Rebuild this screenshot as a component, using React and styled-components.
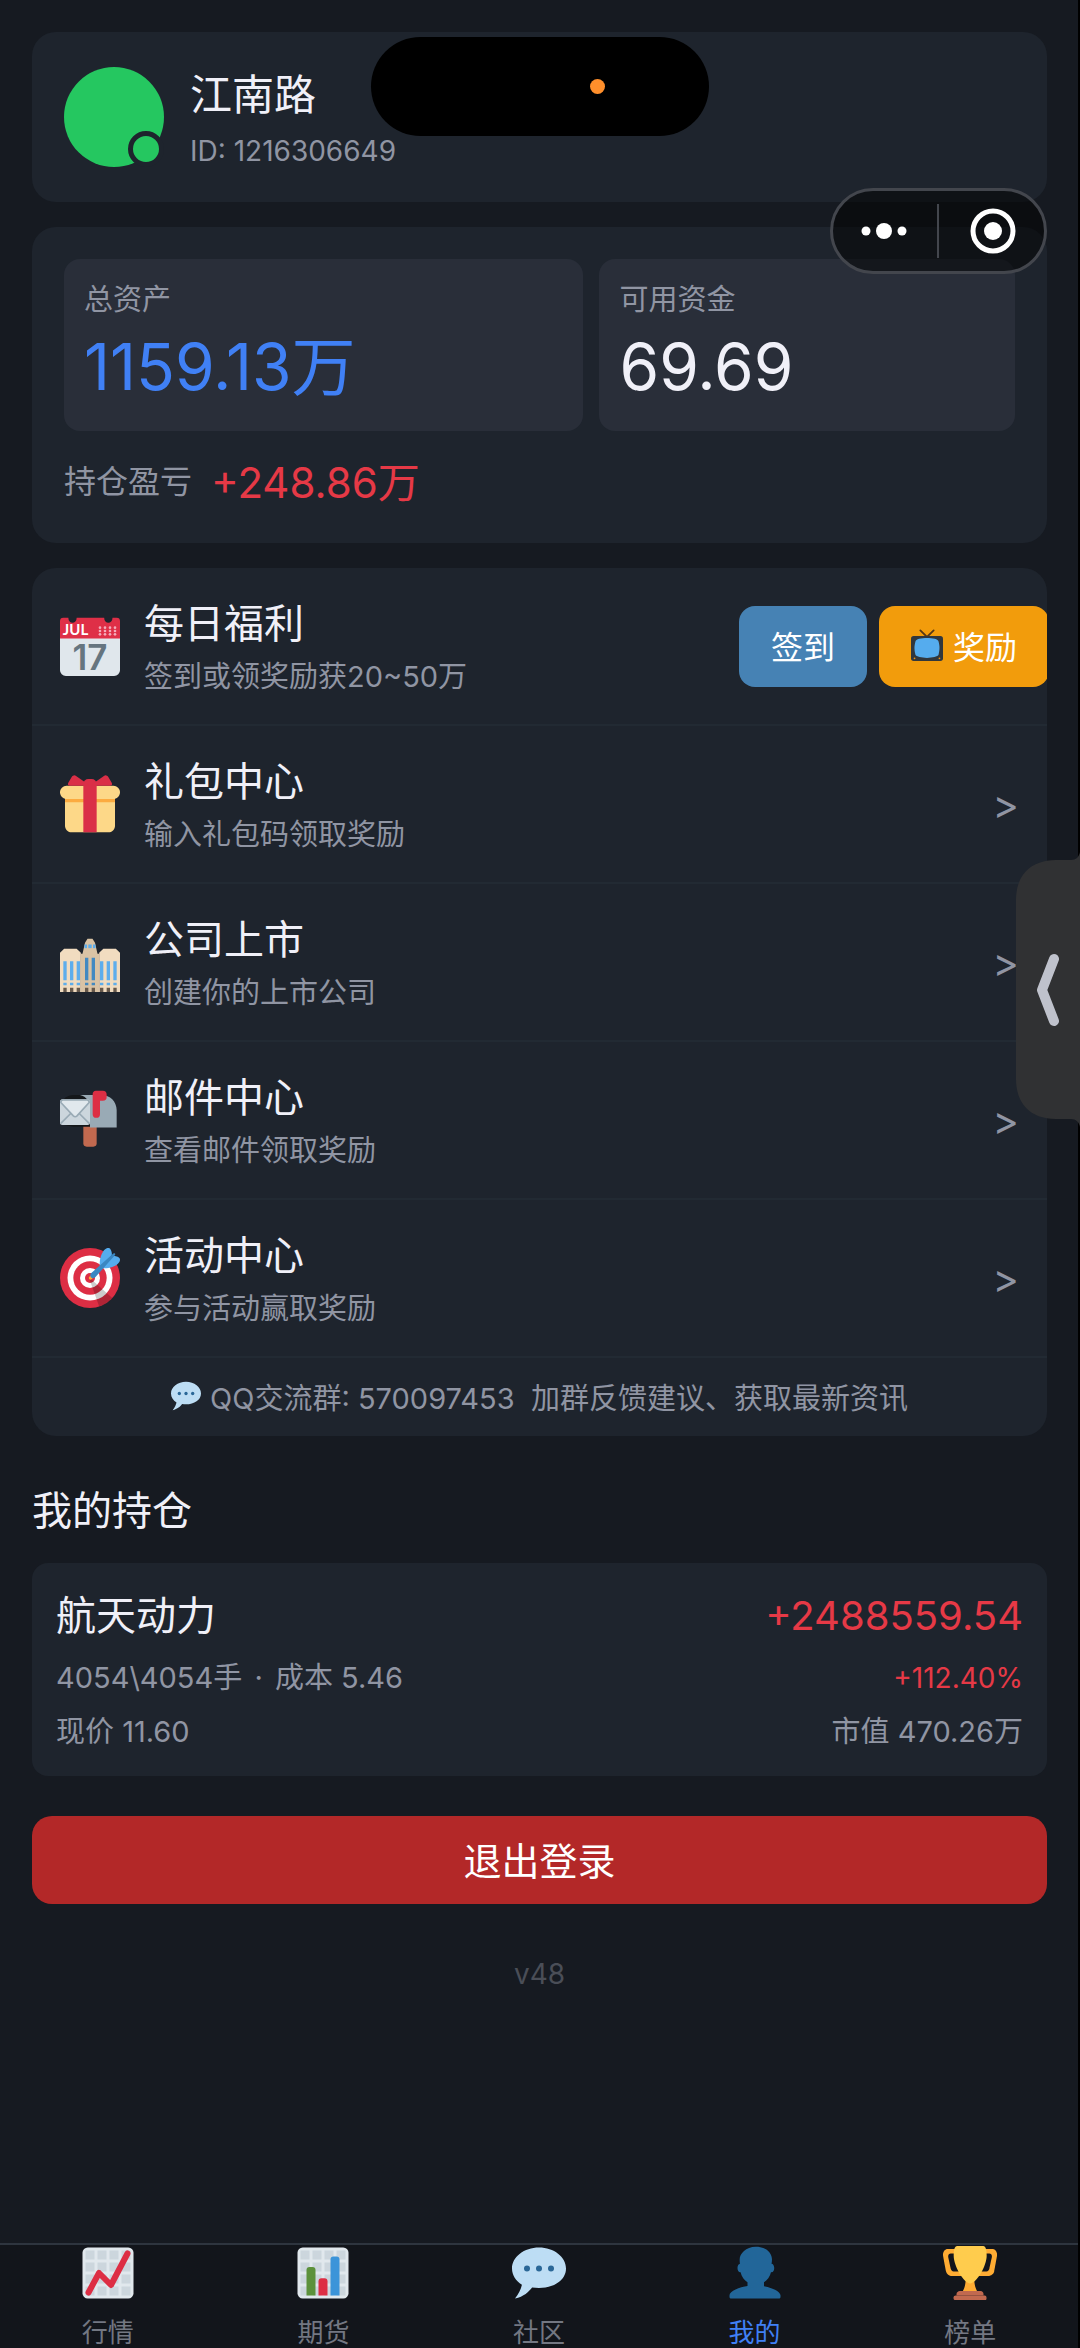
import styled, { createGlobalStyle } from 'styled-components';

const GlobalStyle = createGlobalStyle`
    * {
        box-sizing: border-box;
    }
    body {
        margin: 0;
        background-color: #161a21;
        color: #f0f0f8;
        font-family: Inter, "Noto Sans CJK SC", sans-serif;
    }
    button {
        border: 0;
        padding: 0;
        background: none;
        color: inherit;
        font: inherit;
        cursor: pointer;
    }
    a {
        color: inherit;
        text-decoration: none;
    }
    svg {
        flex: none;
    }
`

// PAGE
const Page = styled.div`
    position: relative;
    display: flex;
    flex-direction: column;
    min-height: 100vh;
    border-right: 2px solid #000;
`
const Main = styled.main`
    flex: 1;
    display: flex;
    flex-direction: column;
    padding: 32px 31px 32px 32px;
`
const Card = styled.section`
    background-color: #1e242d;
    border-radius: 24px;
    margin-bottom: 25px;
    overflow: hidden;
`

// PROFILE
const Profile = styled(Card)`
    display: flex;
    align-items: center;
    gap: 26px;
    height: 170px;
    padding: 0 32px;
`
const Avatar = styled.div`
    position: relative;
    width: 100px;
    height: 100px;
    border-radius: 50%;
    background-color: #25c760;
`
const Online = styled.span`
    position: absolute;
    right: 0;
    bottom: 0;
    width: 36px;
    height: 36px;
    border: 5px solid #1e242d;
    border-radius: 50%;
    background-color: #25c760;
`
const Name = styled.h1`
    margin: 0;
    font-size: 42px;
    line-height: 68px;
    font-weight: 400;
`
const UserId = styled.div`
    color: #9095a3;
    font-size: 28px;
    line-height: 44px;
`

// ASSETS
const Assets = styled(Card)`
    padding: 32px;
`
const Tiles = styled.div`
    display: grid;
    grid-template-columns: 5fr 4fr;
    gap: 16px;
`
const Tile = styled.div`
    height: 172px;
    padding: 19px 20px;
    border-radius: 16px;
    background-color: #292e39;
`
const TileLabel = styled.div`
    color: #9095a3;
    font-size: 29px;
    line-height: 44px;
`
const TileValue = styled.div`
    color: ${props => props.$color || '#f0f0f8'};
    font-size: 64px;
    line-height: 90px;
`
const Profit = styled.div`
    display: flex;
    align-items: center;
    gap: 19px;
    height: 52px;
    margin: 22px 0 6px;
    color: #9095a3;
    font-size: 32px;
`
const ProfitValue = styled.span`
    color: #e63946;
    font-size: 42px;
`

// MENU
const Row = styled.div`
    display: flex;
    align-items: center;
    gap: 24px;
    height: 158px;
    padding: 0 28px;
    border-bottom: 2px solid #222a33;
`
const RowText = styled.div`
    flex: 1;
`
const RowTitle = styled.div`
    font-size: 40px;
    line-height: 62px;
`
const RowDesc = styled.div`
    color: #9095a3;
    font-size: 29px;
    line-height: 44px;
`
const Arrow = styled.span`
    color: #9095a3;
    font-size: 40px;
`
const Actions = styled.div`
    display: flex;
    gap: 12px;
    margin-right: -30px;
`
const ActionBtn = styled.button`
    display: flex;
    align-items: center;
    gap: 10px;
    height: 81px;
    padding: 0 32px 2px;
    border-radius: 16px;
    background-color: ${props => props.$bg};
    color: #fff;
    font-size: 32px;
    white-space: nowrap;
`
const Group = styled.div`
    display: flex;
    align-items: center;
    justify-content: center;
    gap: 9px;
    height: 78px;
    padding-bottom: 2px;
    color: #9095a3;
    font-size: 29px;
`

// HOLDINGS
const Heading = styled.h2`
    margin: 20px 0 22px;
    font-size: 40px;
    line-height: 60px;
    font-weight: 400;
`
const Holding = styled(Card)`
    display: flex;
    flex-direction: column;
    height: 213px;
    padding: 18px 24px;
    margin-bottom: 40px;
    border-radius: 16px;
`
const Line = styled.div`
    display: flex;
    justify-content: space-between;
    color: ${props => props.$strong ? '#f0f0f8' : '#9095a3'};
    font-size: ${props => props.$strong ? '40px' : '29px'};
    line-height: ${props => props.$strong ? '70px' : '54px'};
`
const Dot = styled.span`
    margin: 0 4px;
`
const Up = styled.span`
    color: #e63946;
    font-size: ${props => props.$small ? '28px' : '40px'};
`
const Logout = styled.button`
    height: 88px;
    padding-bottom: 3px;
    border-radius: 20px;
    background-color: #b32828;
    color: #fff;
    font-size: 38px;
`
const Version = styled.div`
    margin-top: 48px;
    color: #4a4e57;
    font-size: 28px;
    line-height: 44px;
    text-align: center;
`

// BOTTOM TABS
const Tabs = styled.nav`
    display: flex;
    height: 105px;
    border-top: 2px solid #2e353f;
    background-color: #12151b;
    overflow: hidden;
`
const Tab = styled.a`
    flex: 1;
    display: flex;
    flex-direction: column;
    align-items: center;
    gap: 18px;
    padding-top: 1px;
    color: ${props => props.$active ? '#4080f5' : '#737782'};
    font-size: 26px;
    line-height: 30px;
`

// FLOATING THINGS
const Island = styled.div`
    position: absolute;
    top: 37px;
    left: 50%;
    width: 338px;
    height: 99px;
    margin-left: -168px;
    padding: 42px 104px;
    border-radius: 50px;
    background-color: #000;
    display: flex;
    justify-content: flex-end;
`
const Recording = styled.i`
    width: 15px;
    height: 15px;
    border-radius: 50%;
    background-color: #ff8f2b;
`
const Capsule = styled.div`
    position: absolute;
    top: 188px;
    right: 31px;
    display: flex;
    align-items: center;
    width: 217px;
    height: 86px;
    border: 3px solid #43464d;
    border-radius: 43px;
    background-color: rgba(0, 0, 0, 0.5);
`
const CapsuleBtn = styled.button`
    flex: 1;
    display: flex;
    justify-content: center;
    padding-right: 2px;
    & + & {
        border-left: 2px solid #43464d;
        padding: 4px 0 4px 3px;
    }
`
const Handle = styled.button`
    position: absolute;
    top: 852px;
    right: -2px;
    width: 64px;
    height: 275px;
`

const Svg = ({ size, children }) => (
    <svg width={size} height={size} viewBox="0 0 36 36" aria-hidden="true">{children}</svg>
)

const Calendar = () => (
    <Svg size={60}>
        <path fill="#E0E7EC" d="M0 12h36v20.500a3.500 3.500 0 0 1-3.500 3.500h-29A3.500 3.500 0 0 1 0 32.500z" />
        <path fill="#DF2F47" d="M2 1h3c0 4 5 4 5 0h16.500c0 4 5 4 5 0H34a2 2 0 0 1 2 2v10.500H0V3a2 2 0 0 1 2-2z" />
        <g fill="#F4ABBA">
            {[24, 27, 30, 33].map(x => [7, 9, 11].map(y => (
                <circle key={`${x}-${y}`} cx={x} cy={y} r="0.800" />
            )))}
        </g>
        <text x="1.700" y="11.500" fill="#fff" fontFamily="Lato, sans-serif" fontWeight="700" fontSize="9">JUL</text>
        <text x="18" y="32.500" fill="#66757F" fontFamily="Inter, sans-serif" fontWeight="600" fontSize="21" textAnchor="middle">17</text>
    </Svg>
)

const Gift = () => (
    <Svg size={60}>
        <path fill="#FDD888" d="M33 31c0 2.200-1.800 4-4 4H7c-2.200 0-4-1.800-4-4V14h30v17z" />
        <path fill="#FDD888" d="M36 11c0 2.200-1.800 4-4 4H4c-2.200 0-4-1.800-4-4s1.800-4 4-4h28c2.200 0 4 1.800 4 4z" />
        <path fill="#FCAB40" d="M3 15h30v2H3z" />
        <path fill="#DA2F47" d="M19 3h-2a3 3 0 0 0-3 3v29h8V6a3 3 0 0 0-3-3z" />
        <path fill="#DA2F47" d="M16 7c1.100 0 1.263-.516.361-1.147L9.639 1.147a1.795 1.795 0 0 0-2.631.589L4.992 5.264C4.446 6.219 4.900 7 6 7h10zm4 0c-1.100 0-1.263-.516-.361-1.147l6.723-4.706a1.796 1.796 0 0 1 2.631.589l2.016 3.527C31.554 6.219 31.100 7 30 7H20z" />
    </Svg>
)

const Building = () => (
    <Svg size={60}>
        <path fill="#F1DCC0" d="M0 12.500l2.500-2.500h7.500l2.500 2.500v23.500H0zM23.500 12.500l2.500-2.500h7.500l2.500 2.500v23.500H23.500z" />
        <path fill="#D9C3A5" d="M12.500 13h11v23h-11zM15 6.500L16.500 4h3L21 6.500l1.500 6.500h-9z" />
        <path fill="#5DADEC" d="M14.700 7.500h6.600v2.200h-6.600z" />
        <path fill="#D9C3A5" d="M16.200 7h.8v3h-.8zM19 7h.8v3H19z" />
        <g fill="#5DADEC">
            {[2, 6, 10, 24, 28, 32].map(x => (
                <path key={x} d={`M${x} 17.500h2v11.500h-2zM${x} 30.500h2v1.500h-2z`} />
            ))}
        </g>
        <path fill="#4289C1" d="M15 15.500h2v13.500h-2zM19 15.500h2v13.500h-2zM15 30.500h2v1.500h-2zM19 30.500h2v1.500h-2z" />
        <path fill="#66584B" d="M2 33.500h2V36H2zM6 33.500h2V36H6zM10 33.500h2V36h-2zM15 33.500h2V36h-2zM19 33.500h2V36h-2zM24 33.500h2V36h-2zM28 33.500h2V36h-2zM32 33.500h2V36h-2z" />
    </Svg>
)

const Mailbox = () => (
    <Svg size={60}>
        <path fill="#C1694F" d="M14 20h8v12a2 2 0 0 1-2 2h-4a2 2 0 0 1-2-2z" />
        <path fill="#14171A" d="M2 7c0-3 4-4 7-4h12v19H8l-6-1z" />
        <path fill="#99AAB5" d="M12 3h13c5 0 9 4 9 9v10.500H18V11c0-4-2-7-6-8z" />
        <path fill="#CCD6DD" d="M1.500 5.500h15A1.500 1.500 0 0 1 18 7v12.500a1.500 1.500 0 0 1-1.500 1.500h-15A1.500 1.500 0 0 1 0 19.500V7a1.500 1.500 0 0 1 1.500-1.500z" />
        <path fill="none" stroke="#99AAB5" d="M.5 20l6.500-6.500M17.500 20L11 13.500" />
        <path fill="#E1E8ED" stroke="#99AAB5" d="M.5 7.500l7.500 8c.7.700 1.500.700 2.200 0l7.300-8c0-1-.5-1.500-1.300-1.500H1.800C1 6 .5 6.500.5 7.500z" />
        <path fill="#DD2E44" d="M21.500.5h4.200a2.300 2.300 0 0 1 2.300 2.300v1.400a2.300 2.300 0 0 1-2.300 2.300H24v8a2.200 2.200 0 0 1-4.400 0v-12c0-1.200.8-2 1.900-2z" />
    </Svg>
)

const Target = () => (
    <Svg size={60}>
        <circle fill="#DD2E44" cx="18" cy="18" r="18" />
        <circle fill="#FFF" cx="18" cy="18" r="13.500" />
        <circle fill="#DD2E44" cx="18" cy="18" r="10" />
        <circle fill="#FFF" cx="18" cy="18" r="6" />
        <circle fill="#DD2E44" cx="18" cy="18" r="3" />
        <path opacity=".2" d="M18.240 18.282l13.144 11.754s-2.647 3.376-7.890 5.109L17.579 18.420l.661-.138z" />
        <path fill="#FFAC33" d="M18.294 19a.994.994 0 0 1-.704-1.699l.563-.563a.995.995 0 0 1 1.408 1.407l-.564.563a.987.987 0 0 1-.703.292z" />
        <path fill="#55ACEE" d="M24.016 6.981c-.403 2.079 0 4.691 0 4.691l7.054-7.388c.291-1.454-.528-3.932-1.718-4.238-1.190-.306-4.079.803-5.336 6.935zm5.003 5.003c-2.079.403-4.691 0-4.691 0l7.388-7.054c1.454-.291 3.932.528 4.238 1.718.306 1.190-.803 4.079-6.935 5.336z" />
        <path fill="#3A87C2" d="M32.798 4.485L21.176 17.587c-.362.362-1.673.882-2.510.046-.836-.836-.419-2.080-.057-2.443L31.815 3.501s.676-.635 1.159-.152-.176 1.136-.176 1.136z" />
    </Svg>
)

const Tv = () => (
    <Svg size={32}>
        <path fill="none" stroke="#553716" strokeWidth="2" strokeLinecap="round" d="M10.500 1.500L18 9l7.500-7.500" />
        <rect fill="#31373D" y="8" width="36" height="28" rx="3" />
        <path fill="#55ACEE" d="M5 14c0-3 7-4 13-4s13 1 13 4c1.500 6 1.500 8 0 15-1 2-7 3.500-13 3.500S6 31 5 29c-1.500-7-1.500-9 0-15z" />
        <circle fill="#F4900C" cx="4" cy="33" r="1" />
        <circle fill="#F4900C" cx="32" cy="33" r="1" />
    </Svg>
)

const Speech = ({ size = 54 }) => (
    <Svg size={size}>
        <path fill="#BDDDF4" d="M18 1C8.059 1 0 7.268 0 15c0 4.368 2.574 8.268 6.604 10.835C6.080 28.144 4.859 31.569 2 35c5.758-.960 9.439-4.761 11.416-7.310C14.876 27.893 16.413 28 18 28c9.941 0 18-5.268 18-13S27.941 1 18 1z" />
        <circle fill="#2A6797" cx="10" cy="15" r="2" />
        <circle fill="#2A6797" cx="18" cy="15" r="2" />
        <circle fill="#2A6797" cx="26" cy="15" r="2" />
    </Svg>
)

const ChartPaper = () => (
    <>
        <rect fill="#E1E8ED" x="1" y="1" width="34" height="34" rx="3.500" />
        <g fill="#CCD6DD">
            {[3, 11, 19, 27].map(x => [3, 11, 19, 27].map(y => (
                <rect key={`${x}-${y}`} x={x} y={y} width="6" height="6" />
            )))}
        </g>
    </>
)

const Trend = () => (
    <Svg size={54}>
        <ChartPaper />
        <path fill="none" stroke="#DD2E44" strokeWidth="4" strokeLinecap="round" strokeLinejoin="round" d="M5 31l7-13 8 8L31 5" />
    </Svg>
)

const Bars = () => (
    <Svg size={54}>
        <ChartPaper />
        <path fill="#5C913B" d="M7 33V16a2 2 0 0 1 2-2h2a2 2 0 0 1 2 2v17z" />
        <path fill="#DD2E44" d="M15 33v-9.500a2 2 0 0 1 2-2h2a2 2 0 0 1 2 2V33z" />
        <path fill="#3B94D9" d="M23 33V9a2 2 0 0 1 2-2h2a2 2 0 0 1 2 2v24z" />
    </Svg>
)

const Person = () => (
    <Svg size={54}>
        <path fill="#226699" d="M24 26.799v-2.566c2-1.348 4.080-3.779 4.703-6.896.186.103.206.170.413.170.991 0 1.709-1.287 1.709-2.873 0-1.562-.823-2.827-1.794-2.865.187-.674.293-1.577.293-2.735C29.324 5.168 26 .527 18.541.527c-6.629 0-10.777 4.641-10.777 8.507 0 1.123.069 2.043.188 2.755-.911.137-1.629 1.352-1.629 2.845 0 1.587.804 2.873 1.796 2.873.206 0 .025-.067.209-.170C8.952 20.453 11 22.885 13 24.232v2.414c-5 .645-12 3.437-12 6.230v1.061C1 35 2.076 35 3.137 35h29.725C33.924 35 35 35 35 33.938v-1.061c0-2.615-6-5.225-11-6.078z" />
    </Svg>
)

const Trophy = () => (
    <Svg size={54}>
        <path fill="#FFAC33" d="M5.123 5h6C12.227 5 13 4.896 13 6V4c0-1.104-.773-2-1.877-2h-8c-2 0-3.583 2.125-3 5 0 0 1.791 9.375 1.917 9.958C2.373 18.500 4.164 20 6.081 20h6.958c1.105 0-.039-1.896-.039-3v-2c0 1.104-.773 2-1.877 2h-4c-1.104 0-1.833-1.042-2-2S3.539 7.667 3.539 7.667C3.206 5.750 4.018 5 5.123 5zm25.812 0h-6C23.831 5 22 4.896 22 6V4c0-1.104 1.831-2 2.935-2h8c2 0 3.584 2.125 3 5 0 0-1.633 9.419-1.771 10-.354 1.500-2.042 3-4 3h-7.146C21.914 20 22 18.104 22 17v-2c0 1.104 1.831 2 2.935 2h4c1.104 0 1.834-1.042 2-2s1.584-7.333 1.584-7.333C32.851 5.750 32.040 5 30.935 5zM20.832 22c0-6.958-2.709 0-2.709 0s-3-6.958-3 0-3.291 10-3.291 10h12.292S20.832 28.958 20.832 22z" />
        <path fill="#FFCC4D" d="M29.123 6.577c0 6.775-6.770 18.423-11 18.423-4.231 0-11-11.648-11-18.423C7.123.801 8.200 0 10.123 0h16c1.923 0 3 .801 3 6.577z" />
        <path fill="#C1694F" d="M27 33H9v-1c0-1.104 1.164-2 2.206-2h13.917c1.042 0 1.877.896 1.877 2v1z" />
        <path fill="#C1694F" d="M29 34.625c0 .760.165 1.375-1.252 1.375H8.498C7.206 36 7 35.385 7 34.625v-.250C7 33.615 7.738 33 8.498 33h19.250c.759 0 1.252.615 1.252 1.375v.250z" />
    </Svg>
)

const menu = [
    { title: '礼包中心', desc: '输入礼包码领取奖励', Icon: Gift },
    { title: '公司上市', desc: '创建你的上市公司', Icon: Building },
    { title: '邮件中心', desc: '查看邮件领取奖励', Icon: Mailbox },
    { title: '活动中心', desc: '参与活动赢取奖励', Icon: Target },
]

const tabs = [
    { label: '行情', Icon: Trend },
    { label: '期货', Icon: Bars },
    { label: '社区', Icon: Speech },
    { label: '我的', Icon: Person, active: true },
    { label: '榜单', Icon: Trophy },
]

const App = () => {
    return (
        <Page>
            <GlobalStyle />
            <Main>
                <Profile>
                    <Avatar><Online /></Avatar>
                    <div>
                        <Name>江南路</Name>
                        <UserId>ID: 1216306649</UserId>
                    </div>
                </Profile>

                <Assets>
                    <Tiles>
                        <Tile>
                            <TileLabel>总资产</TileLabel>
                            <TileValue $color="#4080f5">1159.13万</TileValue>
                        </Tile>
                        <Tile>
                            <TileLabel>可用资金</TileLabel>
                            <TileValue>69.69</TileValue>
                        </Tile>
                    </Tiles>
                    <Profit>
                        持仓盈亏
                        <ProfitValue>+248.86万</ProfitValue>
                    </Profit>
                </Assets>

                <Card>
                    <Row>
                        <Calendar />
                        <RowText>
                            <RowTitle>每日福利</RowTitle>
                            <RowDesc>签到或领奖励获20~50万</RowDesc>
                        </RowText>
                        <Actions>
                            <ActionBtn type="button" $bg="#4682b4">签到</ActionBtn>
                            <ActionBtn type="button" $bg="#f29c0c"><Tv />奖励</ActionBtn>
                        </Actions>
                    </Row>
                    {menu.map(({ title, desc, Icon }) => (
                        <Row as="a" href="#" key={title}>
                            <Icon />
                            <RowText>
                                <RowTitle>{title}</RowTitle>
                                <RowDesc>{desc}</RowDesc>
                            </RowText>
                            <Arrow>&gt;</Arrow>
                        </Row>
                    ))}
                    <Group>
                        <Speech size={30} />
                        <span>QQ交流群: 570097453&nbsp; 加群反馈建议、获取最新资讯</span>
                    </Group>
                </Card>

                <Heading>我的持仓</Heading>
                <Holding>
                    <Line $strong>
                        <span>航天动力</span>
                        <Up>+2488559.54</Up>
                    </Line>
                    <Line>
                        <span>4054\4054手 <Dot>·</Dot> 成本 5.46</span>
                        <Up $small>+112.40%</Up>
                    </Line>
                    <Line>
                        <span>现价 11.60</span>
                        <span>市值 470.26万</span>
                    </Line>
                </Holding>

                <Logout type="button">退出登录</Logout>
                <Version>v48</Version>
            </Main>

            <Tabs>
                {tabs.map(({ label, Icon, active }) => (
                    <Tab href="#" key={label} $active={active}>
                        <Icon />
                        {label}
                    </Tab>
                ))}
            </Tabs>

            <Island><Recording /></Island>
            <Capsule>
                <CapsuleBtn type="button" aria-label="更多">
                    <svg width="46" height="18" viewBox="0 0 46 18" fill="#fff">
                        <circle cx="5" cy="9" r="4.500" />
                        <circle cx="23" cy="9" r="8" />
                        <circle cx="41" cy="9" r="4.500" />
                    </svg>
                </CapsuleBtn>
                <CapsuleBtn type="button" aria-label="关闭">
                    <svg width="46" height="46" viewBox="0 0 46 46">
                        <circle cx="23" cy="23" r="20" fill="none" stroke="#fff" strokeWidth="5" />
                        <circle cx="23" cy="23" r="9" fill="#fff" />
                    </svg>
                </CapsuleBtn>
            </Capsule>
            <Handle type="button" aria-label="展开">
                <svg width="64" height="275" viewBox="0 0 64 275">
                    <path fill="#303133" d="M64 0c-1 5-4 8-9 8H40C14 8 0 24 0 48v179c0 24 14 40 40 40h15c5 0 8 3 9 8z" />
                    <path fill="none" stroke="#bfc2cc" strokeWidth="10" strokeLinecap="round" strokeLinejoin="round" d="M38 107L26 138l12 31" />
                </svg>
            </Handle>
        </Page>
    );
}

export default App;
